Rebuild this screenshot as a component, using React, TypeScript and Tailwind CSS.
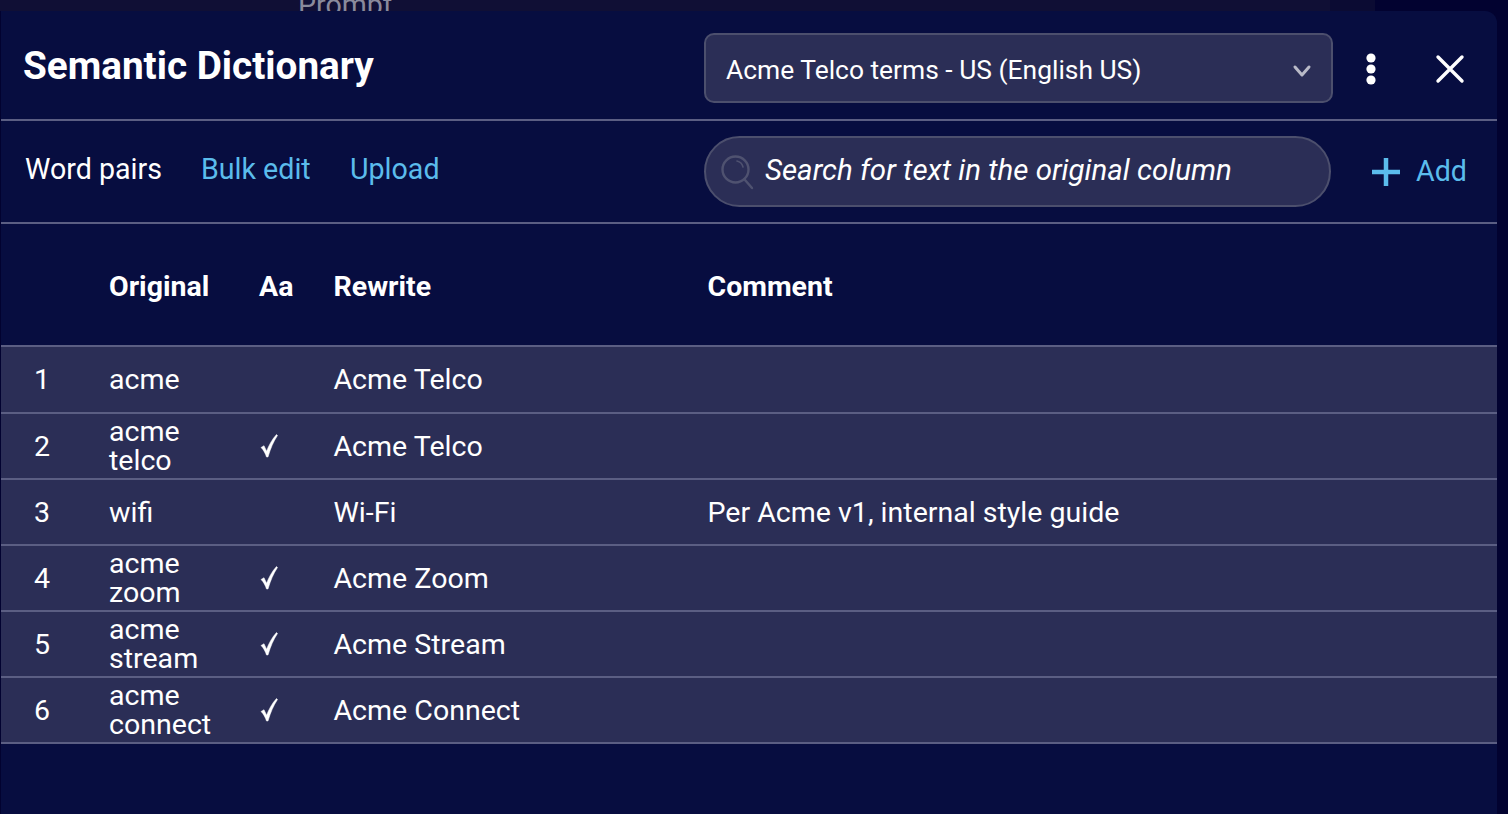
import React from "react";

const rows = [
  { n: 1, o: ["acme"], c: false, r: "Acme Telco", m: "" },
  { n: 2, o: ["acme", "telco"], c: true, r: "Acme Telco", m: "" },
  { n: 3, o: ["wifi"], c: false, r: "Wi-Fi", m: "Per Acme v1, internal style guide" },
  { n: 4, o: ["acme", "zoom"], c: true, r: "Acme Zoom", m: "" },
  { n: 5, o: ["acme", "stream"], c: true, r: "Acme Stream", m: "" },
  { n: 6, o: ["acme", "connect"], c: true, r: "Acme Connect", m: "" },
];

export default function App() {
  return (
    <div className="h-[814px] w-[1508px] overflow-hidden bg-[#020230] font-['Roboto',sans-serif] text-white">
      <div className="flex h-[11px] w-[1375px] overflow-hidden bg-[#0b0b33]">
        <div className="h-[11px] w-[1330px] bg-[#100f35]">
          <span className="ml-[298px] mt-[-11px] block text-[28.6px] leading-[33px] text-[#8a8a9c]">Prompt</span>
        </div>
      </div>
      <div className="ml-px h-[803px] w-[1496px] rounded-tr-xl bg-[#070d40]">
        <header className="flex h-[110px] items-center border-b-2 border-[#5b5e83] pl-[22px]">
          <h1 className="mt-[2px] w-[681px] text-[38.7px] font-bold leading-[42px]">Semantic Dictionary</h1>
          <div className="mt-[6px] flex h-[70px] w-[629px] items-center justify-between rounded-[10px] border-2 border-[#4c4f6d] bg-[#2b2e56] pl-[20px] pr-[19px] pt-[5px] text-[26.4px]">
            <span>Acme Telco terms - US (English US)</span>
            <svg width="20" height="14" viewBox="0 0 20 14" fill="none" stroke="#b9bac7" strokeWidth="3" strokeLinecap="round" strokeLinejoin="round">
              <path d="M3 3l7 8 7-8" />
            </svg>
          </div>
          <svg className="ml-[30px] mt-[8px]" width="16" height="34" viewBox="0 0 16 34" fill="#fff">
            <circle cx="8" cy="6" r="4.6" /><circle cx="8" cy="17" r="4.6" /><circle cx="8" cy="28" r="4.6" />
          </svg>
          <svg className="ml-[56px] mt-[8px]" width="30" height="30" viewBox="0 0 30 30" fill="none" stroke="#fff" strokeWidth="3.4" strokeLinecap="round">
            <path d="M3 3l24 24M27 3L3 27" />
          </svg>
        </header>

        <div className="flex h-[103px] items-center border-b-2 border-[#5b5e83] text-[28.6px]">
          <div className="mt-[-4px] flex w-[703px] pl-[24px]">
            <span className="w-[176px]">Word pairs</span>
            <span className="w-[149px] text-[#5bbcec]">Bulk edit</span>
            <span className="text-[#5bbcec]">Upload</span>
          </div>
          <div className="flex h-[71px] w-[627px] items-center rounded-[36px] border-2 border-[#4c4f6d] bg-[#2b2e56] pl-[14px]">
            <svg width="36" height="36" viewBox="0 0 36 36" fill="none" stroke="#4f5270" strokeWidth="2.4" strokeLinecap="round">
              <circle cx="15.5" cy="15.5" r="13" />
              <path d="M25 26l7 8" />
              <path d="M17 7a8 8 0 0 1 6 6" strokeWidth="1.6" />
            </svg>
            <span className="mb-[2px] ml-[9px] text-[29.45px] italic">Search for text in the original column</span>
          </div>
          <svg className="ml-[40px]" width="30" height="30" viewBox="0 0 30 30" fill="none" stroke="#5bbcec" strokeWidth="4.5">
            <path d="M15 1v28M1 15h28" />
          </svg>
          <span className="ml-[15px] text-[28.6px] text-[#5bbcec]">Add</span>
        </div>

        <div className="grid h-[121px] grid-cols-[108px_150px_74.5px_374px_1fr] items-center pt-[5px] text-[28.5px] font-bold">
          <span />
          <span>Original</span>
          <span>Aa</span>
          <span>Rewrite</span>
          <span>Comment</span>
        </div>

        <div className="border-t-2 border-[#5b5e83]">
          {rows.map((row) => (
            <div
              key={row.n}
              className="grid h-[66px] grid-cols-[108px_150px_74.5px_374px_1fr] items-center border-b-2 border-[#5b5e83] bg-[#2b2e56] text-[28.55px] leading-[29px] first:h-[67px]"
            >
              <span className="pl-[33px]">{row.n}</span>
              <span>
                {row.o.map((w) => (
                  <span key={w} className="block">{w}</span>
                ))}
              </span>
              <span>
                {row.c && (
                  <svg width="20" height="26" viewBox="0 0 20 26" fill="none" stroke="#fff" strokeLinejoin="round" className="block">
                    <path d="M2 14.5l3-1.8 2.6 5.5C10 12 13 6.500 17.500 1.500L18.500 2.500C14.500 8.500 11.500 15.500 9 24H7.500C6.500 20.500 4.500 17 2 14.500Z" fill="#fff" strokeWidth="0.5" />
                  </svg>
                )}
              </span>
              <span>{row.r}</span>
              <span>{row.m}</span>
            </div>
          ))}
        </div>
      </div>
    </div>
  );
}
